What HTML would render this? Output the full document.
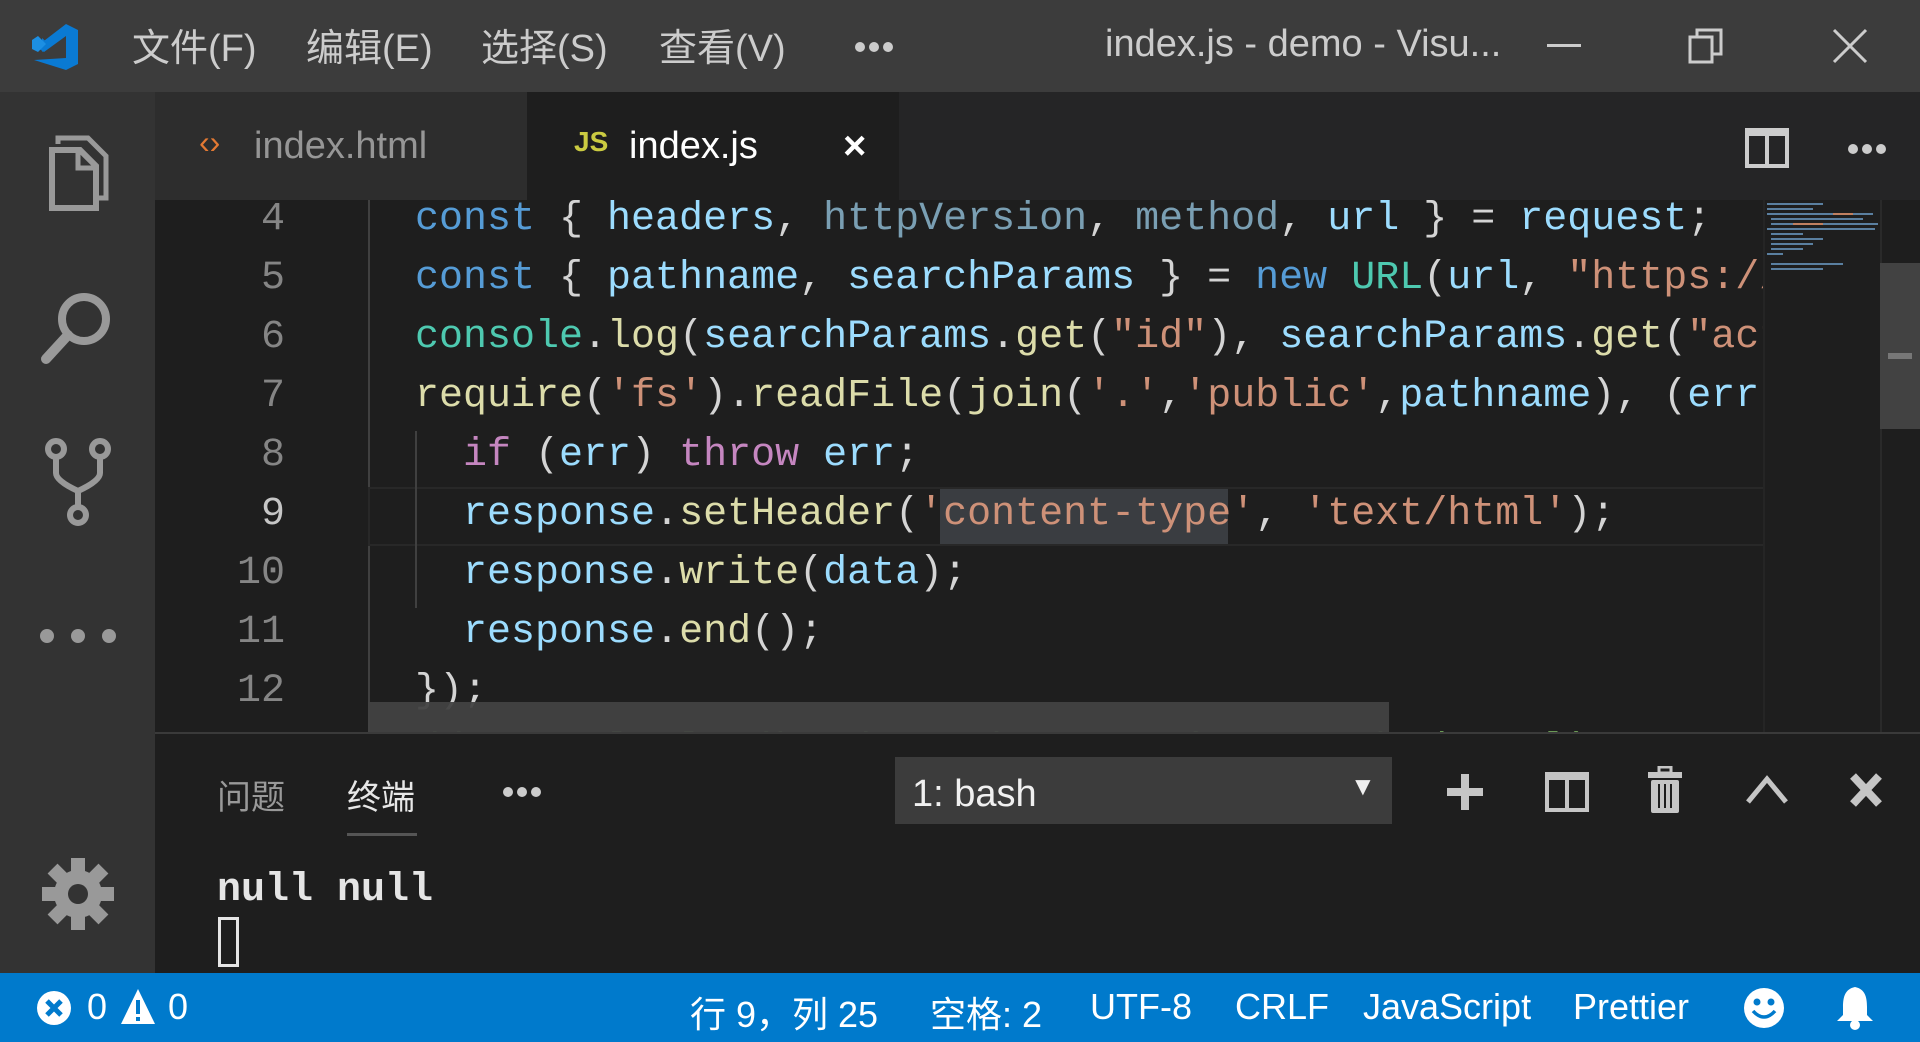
<!DOCTYPE html>
<html><head><meta charset="utf-8"><style>
*{margin:0;padding:0;box-sizing:border-box}
body{width:1920px;height:1042px;overflow:hidden;background:#1e1e1e;font-family:"Liberation Sans","Noto Sans CJK SC",sans-serif;position:relative;color:#ccc}
.abs{position:absolute}
#title{left:0;top:0;width:1920px;height:92px;background:#3c3c3c}
.menu{top:17px;font-size:38px;color:#cccccc;white-space:nowrap}
#act{left:0;top:92px;width:155px;height:881px;background:#333}
#tabs{left:155px;top:92px;width:1765px;height:108px;background:#252526}
.tab{top:0;height:108px;font-size:38px;line-height:108px;white-space:nowrap}
#editor{left:155px;top:200px;width:1765px;height:532px;background:#1e1e1e;overflow:hidden}
.ln{position:absolute;left:0;width:130px;text-align:right;font-family:"Liberation Mono",monospace;font-size:40px;color:#858585;line-height:59px}
.code{position:absolute;left:260px;font-family:"Liberation Mono",monospace;font-size:40px;line-height:59px;white-space:pre;color:#d4d4d4}
.k{color:#569cd6}.v{color:#9cdcfe}.d{color:#7a9fb3}.s{color:#ce9178}.f{color:#dcdcaa}.t{color:#4ec9b0}.c{color:#c586c0}.g{color:#6a9955}
#panel{left:155px;top:732px;width:1765px;height:241px;background:#1e1e1e;border-top:2px solid #3a3a3a}
#status{left:0;top:973px;width:1920px;height:69px;background:#007acc;color:#fff;font-size:36px}
.st{top:13px;white-space:nowrap}
.dots{position:absolute;height:10px}
.dots i{position:absolute;top:0;width:10px;height:10px;border-radius:5px;background:#ccc}
</style></head><body>
<div id="title" class="abs">
 <svg class="abs" style="left:30px;top:22px" width="50" height="50" viewBox="0 0 50 50"><path d="M36 2 L48 8 V42 L36 48 L4 38 L36 36 V14 L14 30 L6 25 L36 2Z M12 16 L20 23 L12 30 Z" fill="#0a7ad3"/><path d="M2 18 L8 14 L16 22 L8 30 L2 27 Z" fill="#1c8fe3"/></svg>
 <div class="abs menu" style="left:132px">文件(F)</div>
 <div class="abs menu" style="left:306px">编辑(E)</div>
 <div class="abs menu" style="left:481px">选择(S)</div>
 <div class="abs menu" style="left:659px">查看(V)</div>
 <div class="dots" style="left:855px;top:42px"><i style="left:0"></i><i style="left:14px"></i><i style="left:28px"></i></div>
 <div class="abs menu" style="left:1105px;top:23px">index.js - demo - Visu...</div>
 <div class="abs" style="left:1547px;top:44px;width:34px;height:3px;background:#ccc"></div>
 <svg class="abs" style="left:1688px;top:28px" width="36" height="36" viewBox="0 0 36 36"><rect x="2" y="9" width="22" height="25" fill="none" stroke="#ccc" stroke-width="3"/><path d="M9 9V2H33V26H24" fill="none" stroke="#ccc" stroke-width="3"/></svg>
 <svg class="abs" style="left:1832px;top:28px" width="36" height="36" viewBox="0 0 36 36"><path d="M2 2L34 34M34 2L2 34" stroke="#ccc" stroke-width="3"/></svg>
</div>
<div id="act" class="abs">
 <svg class="abs" style="left:44px;top:42px" width="66" height="80" viewBox="0 0 66 80"><path d="M14 10V4H44L62 22V64H54" fill="none" stroke="#999" stroke-width="5"/><path d="M8 16H36L52 32V74H8Z" fill="none" stroke="#999" stroke-width="6"/><path d="M34 16V34H52" fill="none" stroke="#999" stroke-width="5"/></svg>
 <svg class="abs" style="left:38px;top:195px" width="80" height="80" viewBox="0 0 80 80"><circle cx="46" cy="32" r="22" fill="none" stroke="#999" stroke-width="8"/><path d="M30 48L8 72" stroke="#999" stroke-width="10" stroke-linecap="round"/></svg>
 <svg class="abs" style="left:44px;top:345px" width="68" height="90" viewBox="0 0 68 90"><circle cx="12" cy="12" r="8" fill="none" stroke="#999" stroke-width="6"/><circle cx="56" cy="12" r="8" fill="none" stroke="#999" stroke-width="6"/><circle cx="34" cy="78" r="8" fill="none" stroke="#999" stroke-width="6"/><path d="M12 20V36Q12 44 34 54Q56 44 56 36V20M34 54V70" fill="none" stroke="#999" stroke-width="6"/></svg>
 <div class="abs" style="left:40px;top:537px;width:84px;height:14px"><span style="position:absolute;left:0;width:14px;height:14px;border-radius:7px;background:#999"></span><span style="position:absolute;left:31px;width:14px;height:14px;border-radius:7px;background:#999"></span><span style="position:absolute;left:62px;width:14px;height:14px;border-radius:7px;background:#999"></span></div>
 <svg class="abs" style="left:42px;top:766px" width="72" height="72" viewBox="0 0 72 72"><g fill="#999"><circle cx="36" cy="36" r="24"/><rect x="29" y="0" width="14" height="72"/><rect x="29" y="0" width="14" height="72" transform="rotate(45 36 36)"/><rect x="29" y="0" width="14" height="72" transform="rotate(90 36 36)"/><rect x="29" y="0" width="14" height="72" transform="rotate(135 36 36)"/></g><circle cx="36" cy="36" r="10" fill="#333"/></svg>
</div>
<div id="tabs" class="abs">
 <div class="abs tab" style="left:0;width:372px;background:#2d2d2d"><span style="position:absolute;left:44px;color:#e37933;font-size:32px;top:-4px">‹›</span><span style="position:absolute;left:99px;color:#969696">index.html</span></div>
 <div class="abs tab" style="left:372px;width:372px;background:#1e1e1e"><span style="position:absolute;left:47px;color:#cbcb41;font-size:28px;font-weight:bold;top:-4px">JS</span><span style="position:absolute;left:102px;color:#fff">index.js</span><span style="position:absolute;left:316px;color:#fff;font-size:40px;font-weight:bold">×</span></div>
 <svg class="abs" style="left:1590px;top:36px" width="44" height="40" viewBox="0 0 44 40"><rect x="2" y="2" width="40" height="36" fill="none" stroke="#ccc" stroke-width="4"/><rect x="2" y="2" width="40" height="6" fill="#ccc"/><path d="M22 2V38" stroke="#ccc" stroke-width="4"/></svg>
 <div class="dots" style="left:1693px;top:52px"><i style="left:0"></i><i style="left:14px"></i><i style="left:28px"></i></div>
</div>
<div id="editor" class="abs">
 <div class="abs" style="left:213px;top:0;width:2px;height:532px;background:#404040"></div>
 <div class="abs" style="left:213px;top:287px;width:1550px;height:59px;border:2px solid #282828"></div>
 <div class="abs" style="left:260px;top:231px;width:2px;height:177px;background:#404040"></div>
 <div class="abs" style="left:785px;top:289px;width:288px;height:55px;background:#3a3d41"></div>
 <div class="ln" style="top:-10px">4</div><div class="ln" style="top:49px">5</div><div class="ln" style="top:108px">6</div><div class="ln" style="top:167px">7</div><div class="ln" style="top:226px">8</div><div class="ln" style="top:285px;color:#c6c6c6">9</div><div class="ln" style="top:344px">10</div><div class="ln" style="top:403px">11</div><div class="ln" style="top:462px">12</div>
 <div class="code" style="top:-10px"><span class="k">const</span> { <span class="v">headers</span>, <span class="d">httpVersion</span>, <span class="d">method</span>, <span class="v">url</span> } = <span class="v">request</span>;</div>
 <div class="code" style="top:49px"><span class="k">const</span> { <span class="v">pathname</span>, <span class="v">searchParams</span> } = <span class="k">new</span> <span class="t">URL</span>(<span class="v">url</span>, <span class="s">"https://</span></div>
 <div class="code" style="top:108px"><span class="t">console</span>.<span class="f">log</span>(<span class="v">searchParams</span>.<span class="f">get</span>(<span class="s">"id"</span>), <span class="v">searchParams</span>.<span class="f">get</span>(<span class="s">"action"</span>))</div>
 <div class="code" style="top:167px"><span class="f">require</span>(<span class="s">'fs'</span>).<span class="f">readFile</span>(<span class="f">join</span>(<span class="s">'.'</span>,<span class="s">'public'</span>,<span class="v">pathname</span>), (<span class="v">err</span>, <span class="v">data</span>) => {</div>
 <div class="code" style="top:226px">  <span class="c">if</span> (<span class="v">err</span>) <span class="c">throw</span> <span class="v">err</span>;</div>
 <div class="code" style="top:285px">  <span class="v">response</span>.<span class="f">setHeader</span>(<span class="s">'content-type'</span>, <span class="s">'text/html'</span>);</div>
 <div class="code" style="top:344px">  <span class="v">response</span>.<span class="f">write</span>(<span class="v">data</span>);</div>
 <div class="code" style="top:403px">  <span class="v">response</span>.<span class="f">end</span>();</div>
 <div class="code" style="top:462px">});</div>
 <div class="code" style="top:521px"><span class="g">// console.log(headers, httpVersion, method, url);</span></div>
 <div class="abs" style="left:213px;top:502px;width:1021px;height:30px;background:#424242;opacity:.95"></div>
 <div class="abs" style="left:1608px;top:0;width:117px;height:532px;background:#1e1e1e;border-left:2px solid #252525"></div>
 <svg class="abs" style="left:1608px;top:0" width="117" height="80"><g stroke-width="2"><path d="M4 4H60M4 9H50M4 14H110M8 19H100M8 24H115M4 29H112M8 34H40M8 39H60M8 44H50M8 49H40M4 54H20M8 64H80M8 69H60" stroke="#5a7fa0"/><path d="M30 24H60M70 14H90" stroke="#c08060"/></g></svg>
 <div class="abs" style="left:1725px;top:0;width:40px;height:532px;background:#1e1e1e;border-left:2px solid #2a2a2a"></div>
 <div class="abs" style="left:1725px;top:63px;width:40px;height:166px;background:#424242"></div>
 <div class="abs" style="left:1733px;top:153px;width:24px;height:6px;background:#777"></div>
</div>
<div id="panel" class="abs">
 <div class="abs" style="left:62px;top:36px;font-size:34px;color:#999">问题</div>
 <div class="abs" style="left:192px;top:36px;font-size:34px;color:#e7e7e7">终端</div>
 <div class="abs" style="left:192px;top:99px;width:70px;height:3px;background::#555;background:#555"></div>
 <div class="dots" style="left:348px;top:53px"><i style="left:0"></i><i style="left:14px"></i><i style="left:28px"></i></div>
 <div class="abs" style="left:740px;top:23px;width:497px;height:67px;background:#3c3c3c"><span style="position:absolute;left:17px;top:16px;font-size:38px;color:#f0f0f0">1: bash</span><span style="position:absolute;left:455px;top:14px;font-size:26px;color:#f0f0f0">▼</span></div>
 <svg class="abs" style="left:1290px;top:38px" width="40" height="40"><path d="M20 2V38M2 20H38" stroke="#c5c5c5" stroke-width="8"/></svg>
 <svg class="abs" style="left:1390px;top:38px" width="44" height="40"><rect x="2" y="2" width="40" height="36" fill="none" stroke="#c5c5c5" stroke-width="4"/><rect x="2" y="2" width="40" height="6" fill="#c5c5c5"/><path d="M22 2V38" stroke="#c5c5c5" stroke-width="4"/></svg>
 <svg class="abs" style="left:1492px;top:32px" width="36" height="48"><rect x="12" y="1" width="12" height="6" fill="none" stroke="#c5c5c5" stroke-width="3"/><rect x="1" y="6" width="34" height="6" fill="#c5c5c5"/><rect x="4" y="14" width="28" height="33" rx="2" fill="#c5c5c5"/><path d="M12 18V42M18 18V42M24 18V42" stroke="#1e1e1e" stroke-width="2"/></svg>
 <svg class="abs" style="left:1590px;top:40px" width="44" height="30"><path d="M3 28L22 5L41 28" fill="none" stroke="#c5c5c5" stroke-width="5"/></svg>
 <svg class="abs" style="left:1694px;top:38px" width="34" height="36"><path d="M4 4L30 32M30 4L4 32" stroke="#c5c5c5" stroke-width="8"/></svg>
 <div class="abs" style="left:62px;top:134px;font-family:'Liberation Mono',monospace;font-size:40px;color:#e5e5e5;font-weight:bold">null null</div>
 <div class="abs" style="left:63px;top:183px;width:21px;height:50px;border:3px solid #e5e5e5"></div>
</div>
<div id="status" class="abs">
 <svg class="abs" style="left:36px;top:17px" width="36" height="36"><circle cx="18" cy="18" r="17" fill="#fff"/><path d="M11 11L25 25M25 11L11 25" stroke="#007acc" stroke-width="5"/></svg>
 <div class="abs st" style="left:87px">0</div>
 <svg class="abs" style="left:120px;top:15px" width="36" height="38"><path d="M18 1L35 36H1Z" fill="#fff"/><path d="M18 12V26M18 29V33" stroke="#007acc" stroke-width="4"/></svg>
 <div class="abs st" style="left:168px">0</div>
 <div class="abs st" style="left:690px">行 9，列 25</div>
 <div class="abs st" style="left:930px">空格: 2</div>
 <div class="abs st" style="left:1090px">UTF-8</div>
 <div class="abs st" style="left:1235px">CRLF</div>
 <div class="abs st" style="left:1363px">JavaScript</div>
 <div class="abs st" style="left:1573px">Prettier</div>
 <svg class="abs" style="left:1743px;top:14px" width="42" height="42"><circle cx="21" cy="21" r="20" fill="#fff"/><circle cx="14" cy="15" r="3.5" fill="#007acc"/><circle cx="28" cy="15" r="3.5" fill="#007acc"/><path d="M10 24Q21 36 32 24" fill="none" stroke="#007acc" stroke-width="3.5"/></svg>
 <svg class="abs" style="left:1834px;top:12px" width="42" height="46"><path d="M21 2C11 4 9 12 9 22V30L3 36H39L33 30V22C33 12 31 4 21 2Z" fill="#fff"/><circle cx="21" cy="40" r="5" fill="#fff"/></svg>
</div>
</body></html>
